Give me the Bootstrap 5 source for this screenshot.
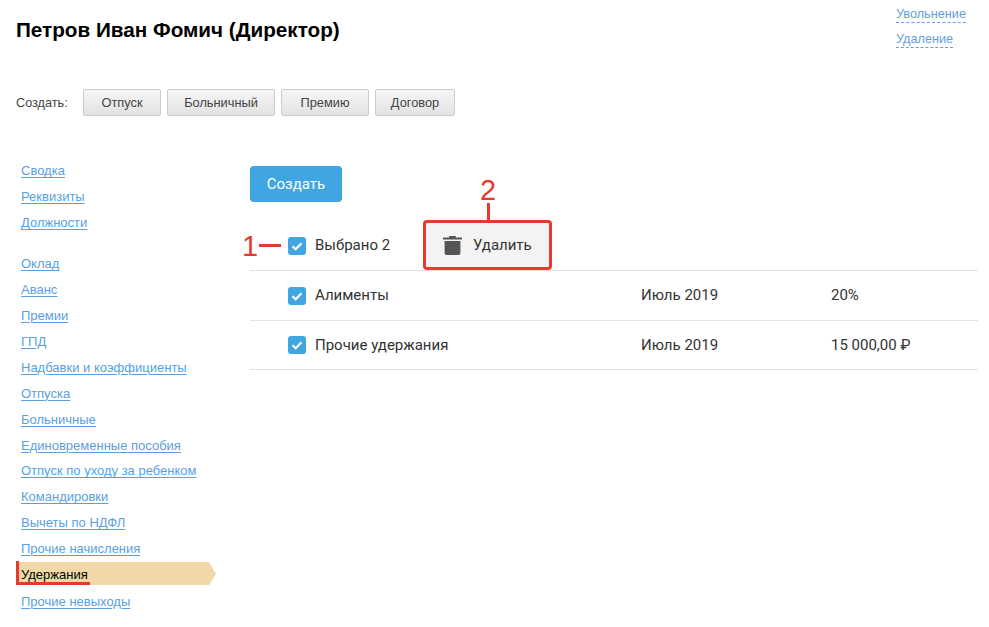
<!DOCTYPE html>
<html lang="ru"><head><meta charset="utf-8"><title>Удержания</title>
<link rel="stylesheet" href="https://cdn.jsdelivr.net/npm/bootstrap@5.3.0/dist/css/bootstrap.min.css">
<style>
html,body{height:627px;overflow:hidden}
body{background:#fff;font-family:"Liberation Sans",Arial,sans-serif;font-size:13px;color:#333;position:relative}
.page-head{padding:0 23px 0 16px;height:60px}
.emp-name{font-size:20.7px;font-weight:700;color:#000;line-height:24px;margin:18px 0 0}
.head-links{padding-top:7px;line-height:18px;font-size:12.7px;width:70px}
.head-links a{display:table;color:#64a0e0;text-decoration:none;border-bottom:1px dashed #64a0e0;line-height:15px;margin-bottom:9px}
.create-bar{padding:29px 0 0 16px;height:106px;color:#444;font-size:12.7px}
.create-lbl{width:67px;line-height:28px}
.btn-row{gap:6px}
.gray-btn{height:27px;padding:0;border:1px solid #ccc;border-radius:2px;background:linear-gradient(#f6f6f6,#e2e2e2);color:#444;font-size:12.8px;line-height:25px}
.w-otp{width:78px}.w-bol{width:108px}.w-pre{width:88px}.w-dog{width:80px}
.side{width:250px;flex:none;padding-left:16px}
.side-wrap{margin-top:-7.7px}
.side-wrap a{display:block;color:#5a9fe0;height:25.9px;line-height:26px;padding-left:5px;text-decoration-thickness:1px;text-underline-offset:2px}
.side-gap{height:15.3px}
.side-wrap a.side-active{color:#000;text-decoration:none;background:#f2d7a8;height:23.5px;width:200px;margin:0 0 3.4px;line-height:26px;clip-path:polygon(0 0,193px 0,200px 50%,193px 100%,0 100%)}
.body-main{width:728px;font-family:Roboto,sans-serif;font-size:15px;color:#333}
.blue-btn{width:92px;height:36px;background:#3fa6e2;color:#fff;border:0;border-radius:4px;font-size:15px;padding:0;display:block}
.sel-row{height:50px;border-bottom:1px solid #e4e4e4;padding-left:38px}
.sel-row.first{margin-top:19px;height:50px}
.sel-row.last{height:49px}
.chk{width:18px;height:18px;background:#3fa6e2;border-radius:3px;flex:none;margin-right:9px}
.chk svg{display:block}
.c-name{width:326px}
.c-date{width:190px}
.del-btn{position:absolute;left:173px;top:-1px;width:129px;height:50px;background:#f3f3f3;border:3px solid #e8392f;border-radius:4px;font-size:15px;color:#333;padding-left:17px}
.del-gap{margin-left:11px}
.sel-rel{position:relative}
.a-num{position:absolute;color:#e8392f;font-family:"Liberation Sans",sans-serif;font-size:29px;line-height:30px}
.a-line{position:absolute;background:#e8392f}
.al-1{left:259px;top:244px;width:22px;height:3px}
.al-2{left:487px;top:203px;width:3px;height:18px}
.al-3{left:16px;top:561px;width:3px;height:24px}
.al-4{left:16px;top:582px;width:74px;height:3px}
.an-1{left:242px;top:231px}
.an-2{left:480px;top:175px}
</style></head><body>
<div class="page-head d-flex justify-content-between">
  <h1 class="emp-name">Петров Иван Фомич (Директор)</h1>
  <div class="head-links"><a href="#">Увольнение</a><a href="#">Удаление</a></div>
</div>
<div class="create-bar d-flex align-items-start">
  <span class="create-lbl">Создать:</span>
  <div class="d-flex btn-row">
    <button class="gray-btn w-otp">Отпуск</button><button class="gray-btn w-bol">Больничный</button><button class="gray-btn w-pre">Премию</button><button class="gray-btn w-dog">Договор</button>
  </div>
</div>
<div class="d-flex">
  <nav class="side">
    <div class="side-wrap">
    <a href="#">Сводка</a><a href="#">Реквизиты</a><a href="#">Должности</a>
    <div class="side-gap"></div>
    <a href="#">Оклад</a><a href="#">Аванс</a><a href="#">Премии</a><a href="#">ГПД</a><a href="#">Надбавки и коэффициенты</a><a href="#">Отпуска</a><a href="#">Больничные</a><a href="#">Единовременные пособия</a><a href="#">Отпуск по уходу за ребенком</a><a href="#">Командировки</a><a href="#">Вычеты по НДФЛ</a><a href="#">Прочие начисления</a>
    <a href="#" class="side-active">Удержания</a>
    <a href="#">Прочие невыходы</a>
    </div>
  </nav>
  <main class="body-main">
    <button class="blue-btn">Создать</button>
    <div class="sel-rel sel-row first d-flex align-items-center">
      <span class="chk"><svg width="18" height="18" viewBox="0 0 18 18"><path d="M4.5 9.2l3.2 3 5.8-6" fill="none" stroke="#fff" stroke-width="2.2"/></svg></span><span>Выбрано 2</span>
      <button class="del-btn d-flex align-items-center"><svg width="19" height="20" viewBox="0 0 19 20"><path d="M0 2.6h6.2V1h6.6v1.6H19v1.9H0zM1.6 6h15.8v12a2 2 0 0 1-2 2H3.6a2 2 0 0 1-2-2z" fill="#555"/></svg><span class="del-gap">Удалить</span></button>
    </div>
    <div class="sel-row d-flex align-items-center"><span class="chk"><svg width="18" height="18" viewBox="0 0 18 18"><path d="M4.5 9.2l3.2 3 5.8-6" fill="none" stroke="#fff" stroke-width="2.2"/></svg></span><span class="c-name">Алименты</span><span class="c-date">Июль 2019</span><span>20%</span></div>
    <div class="sel-row last d-flex align-items-center"><span class="chk"><svg width="18" height="18" viewBox="0 0 18 18"><path d="M4.5 9.2l3.2 3 5.8-6" fill="none" stroke="#fff" stroke-width="2.2"/></svg></span><span class="c-name">Прочие удержания</span><span class="c-date">Июль 2019</span><span>15 000,00 ₽</span></div>
  </main>
</div>
<div class="a-num an-1">1</div>
<div class="a-line al-1"></div>
<div class="a-num an-2">2</div>
<div class="a-line al-2"></div>
<div class="a-line al-3"></div>
<div class="a-line al-4"></div>
<script src="https://cdn.jsdelivr.net/npm/bootstrap@5.3.0/dist/js/bootstrap.bundle.min.js"></script>
</body></html>
